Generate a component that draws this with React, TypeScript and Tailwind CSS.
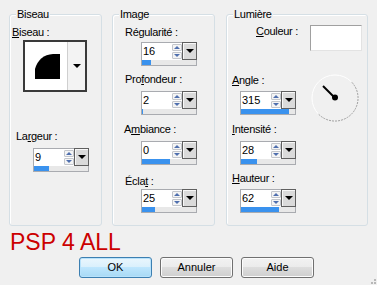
import React from "react";

const Label = ({ children, className = "" }: { children: React.ReactNode; className?: string }) => (
  <div className={`h-[13px] leading-[13px] text-[11px] tracking-[-0.3px] whitespace-nowrap text-black ${className}`}>{children}</div>
);

const U = ({ children }: { children: React.ReactNode }) => (
  <span className="underline decoration-[1px] underline-offset-[1px]">{children}</span>
);

const Spinner = ({ value, fill, className = "" }: { value: string; fill: number; className?: string }) => (
  <div className={`w-[56px] h-[24px] border border-[#a9abb0] bg-white flex flex-col ${className}`}>
    <div className="flex h-[17px]">
      <div className="w-[30px] pl-[1px] text-[11px] leading-[17px] text-black">{value}</div>
      <div className="w-[10px] flex flex-col gap-[1px] pt-[1px]">
        <div className="h-[7px] border border-[#c3c6cc] rounded-[1px] bg-[#f4f4f4] flex items-center justify-center">
          <div className="w-0 h-0 border-l-[3px] border-r-[3px] border-b-[3px] border-l-transparent border-r-transparent border-b-[#4f6fae]" />
        </div>
        <div className="h-[7px] border border-[#c3c6cc] rounded-[1px] bg-[#f4f4f4] flex items-center justify-center">
          <div className="w-0 h-0 border-l-[3px] border-r-[3px] border-t-[3px] border-l-transparent border-r-transparent border-t-[#4f6fae]" />
        </div>
      </div>
      <div className="w-[15px] -mr-[1px] -mt-[1px] h-[18px] border border-[#5f5f5f] bg-[#dadada] flex items-center justify-center shadow-[inset_1px_1px_0_#f8f8f8]">
        <div className="w-0 h-0 border-l-[4px] border-r-[4px] border-t-[4px] border-l-transparent border-r-transparent border-t-black" />
      </div>
    </div>
    <div className="flex-1 bg-[#e8e8e8] flex">
      <div className="h-full bg-[#3a92ee]" style={{ width: fill }} />
    </div>
  </div>
);

const Group = ({ title, width, className = "", children }: { title: string; width: number; className?: string; children: React.ReactNode }) => (
  <div className={`relative h-[212px] border border-[#d5dfe5] rounded-[3px] shadow-[inset_1px_1px_0_#ffffff] flex flex-col ${className}`} style={{ width }}>
    <div className="absolute top-[-7px] left-[6px] px-[1px] bg-[#f0f0f0]">
      <Label>{title}</Label>
    </div>
    {children}
  </div>
);

const Btn = ({ children, primary = false }: { children: React.ReactNode; primary?: boolean }) => (
  <div
    className={`w-[73px] h-[21px] rounded-[3px] border flex items-center justify-center text-[11px] text-black ${
      primary
        ? "border-[#3c7fb1] bg-[linear-gradient(#eaf6fd_0%,#d9f0fc_50%,#bee6fd_50%,#a7d9f5_100%)] shadow-[inset_0_0_0_1px_#b8e2fb]"
        : "border-[#707070] bg-[linear-gradient(#f2f2f2_0%,#ebebeb_50%,#dddddd_50%,#cfcfcf_100%)] shadow-[inset_0_0_0_1px_#fcfcfc]"
    }`}
  >
    {children}
  </div>
);

export default function App() {
  return (
    <div className="w-[377px] h-[285px] bg-[#f0f0f0] relative overflow-hidden font-['Liberation_Sans',Arial,sans-serif]">
      <div className="flex pt-[14px] pl-[9px]">
        <Group title="Biseau" width={93}>
          <Label className="mt-[11px] ml-[2px]">
            <U>B</U>iseau :
          </Label>
          <div className="ml-[13px] mt-[1px] w-[64px] h-[52px] border-2 border-[#3a3a3a] bg-white flex">
            <div className="flex-1">
              <svg width="42" height="48" viewBox="0 0 42 48">
                <path d="M10 37 L35 37 L35 12 L28 12 Q14 13 10 27 Z" fill="#000" />
              </svg>
            </div>
            <div className="w-[18px] border-l border-[#cfcfcf] bg-[#f3f3f3] flex items-center justify-center">
              <div className="w-0 h-0 border-l-[4px] border-r-[4px] border-t-[4px] border-l-transparent border-r-transparent border-t-black" />
            </div>
          </div>
          <Label className="mt-[38px] ml-[6px]">
            La<U>r</U>geur :
          </Label>
          <Spinner value="9" fill={15} className="mt-[5px] ml-[23px]" />
        </Group>

        <Group title="Image" width={103} className="ml-[10px]">
          <Label className="mt-[11px] ml-[12px]">Régularité :</Label>
          <Spinner value="16" fill={9} className="mt-[3px] ml-[28px]" />
          <Label className="mt-[7px] ml-[12px]">
            Pro<U>f</U>ondeur :
          </Label>
          <Spinner value="2" fill={1} className="mt-[5px] ml-[28px]" />
          <Label className="mt-[8px] ml-[11px]">
            A<U>m</U>biance :
          </Label>
          <Spinner value="0" fill={28} className="mt-[5px] ml-[28px]" />
          <Label className="mt-[10px] ml-[12px]">
            Écla<U>t</U> :
          </Label>
          <Spinner value="25" fill={13} className="mt-[1px] ml-[28px]" />
        </Group>

        <Group title="Lumière" width={142} className="ml-[11px]">
          <div className="flex items-start mt-[10px]">
            <Label className="ml-[29px]">
              <U>C</U>ouleur :
            </Label>
            <div className="ml-auto mr-[5px] w-[52px] h-[26px] border border-t-[#a0a0a0] border-l-[#a0a0a0] border-b-[#e3e3e3] border-r-[#e3e3e3] bg-white" />
          </div>
          <div className="flex items-start">
            <div className="flex flex-col ml-[5px] mt-[23px]">
              <Label>
                <U>A</U>ngle :
              </Label>
              <Spinner value="315" fill={48} className="mt-[4px] ml-[8px]" />
              <Label className="mt-[8px]">
                <U>I</U>ntensité :
              </Label>
              <Spinner value="28" fill={16} className="mt-[5px] ml-[8px]" />
              <Label className="mt-[7px]">
                <U>H</U>auteur :
              </Label>
              <Spinner value="62" fill={38} className="mt-[4px] ml-[8px]" />
            </div>
            <svg width="48" height="48" viewBox="0 0 48 48" className="ml-[15px] mt-[23px]">
              <path d="M40.3 7.7 A23 23 0 0 0 7.7 40.3" fill="none" stroke="#ffffff" strokeWidth="1" />
              <path d="M7.7 40.3 A23 23 0 0 0 40.3 7.7" fill="none" stroke="#a0a0a0" strokeWidth="1" strokeDasharray="2 1" />
              <line x1="12" y1="12" x2="24" y2="24" stroke="#000" strokeWidth="2" />
              <circle cx="24" cy="23.5" r="3" fill="#000" />
            </svg>
          </div>
        </Group>
      </div>

      <div className="mt-[3px] pl-[10px] h-[26px] leading-[26px] text-[23px] text-[#cc0000] whitespace-nowrap">PSP 4 ALL</div>

      <div className="flex gap-[8px] pl-[79px] mt-[2px]">
        <Btn primary>OK</Btn>
        <Btn>Annuler</Btn>
        <Btn>Aide</Btn>
      </div>

      <svg width="12" height="12" viewBox="0 0 12 12" className="absolute right-0 bottom-0">
        <rect x="9" y="9" width="2" height="2" fill="#b8b8b8" />
        <rect x="6" y="9" width="2" height="2" fill="#b8b8b8" />
        <rect x="9" y="6" width="2" height="2" fill="#b8b8b8" />
      </svg>
    </div>
  );
}
